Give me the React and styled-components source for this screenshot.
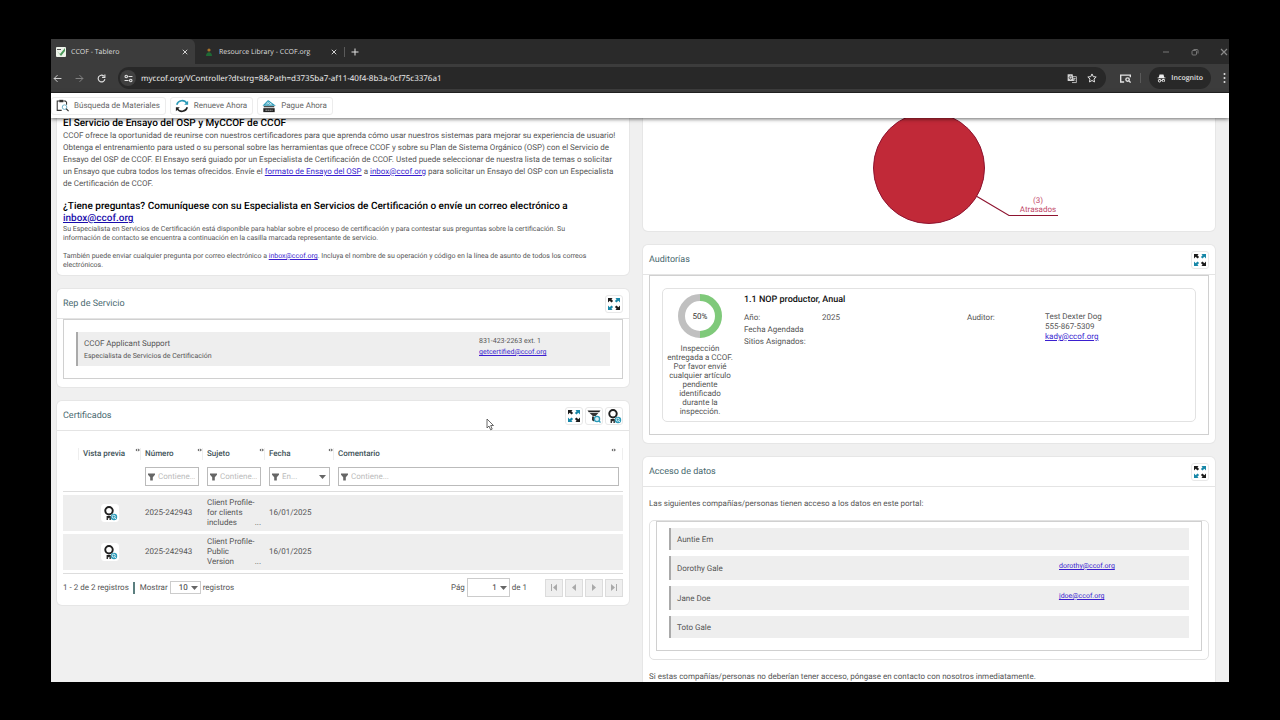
import React from 'react';
import styled, {createGlobalStyle, css} from 'styled-components'

const GlobalStyle = createGlobalStyle`
  * {
    box-sizing: border-box;
  }
  body {
    margin: 0;
    background: #000;
    font-family: Roboto, "Liberation Sans", sans-serif;
    font-size: 8px;
    color: #555;
    text-rendering: geometricPrecision;
  }
  button, input, select {
    font-family: inherit;
    font-size: inherit;
    color: inherit;
    text-rendering: inherit;
    margin: 0;
  }
  h1, h2, h3, p {
    margin: 0;
  }
  a {
    color: #3a1fd0;
  }
`

/* browser frame */
const Desktop = styled.div`
  display: flex;
  height: 100vh;
  padding: 39px 51px 38px;
  background: #000;
`
const Window = styled.div`
  flex: 1;
  min-width: 0;
  display: flex;
  flex-direction: column;
  overflow: hidden;
  background: #f0f0f0;
`
const TabStrip = styled.div`
  display: flex;
  align-items: center;
  height: 25px;
  flex: none;
  background: #2a2a2a;
  color: #dedede;
  font-family: "Open Sans", "Noto Sans", sans-serif;
`
const Tab = styled.div`
  display: flex;
  align-items: center;
  gap: 5px;
  width: ${({$active}) => $active ? 144 : 149}px;
  height: 25px;
  padding: 0 5px;
  padding-left: ${({$active}) => $active ? 5 : 9}px;
  border-radius: 0 6px 0 0;
  font-size: 7px;
  background: ${({$active}) => $active ? '#3c3c3c' : 'transparent'};
`
const TabTitle = styled.span`
  flex: 1;
  padding-top: 1px;
  white-space: nowrap;
`
const ChromeButton = styled.button`
  display: flex;
  align-items: center;
  justify-content: center;
  width: ${({$w}) => $w || 10}px;
  height: 16px;
  padding: 0;
  border: 0;
  background: none;
  color: ${({$dim}) => $dim ? '#8a8a8a' : '#e2e2e2'};
`
const WindowButtons = styled.div`
  display: flex;
  gap: 19px;
  margin-left: auto;
`
const Toolbar = styled.div`
  display: flex;
  align-items: center;
  height: 29px;
  flex: none;
  gap: 12px;
  padding: 0 0 0 1px;
  background: #3c3c3c;
  border-bottom: 1px solid #262626;
  color: #e2e2e2;
`
const ToolbarEnd = styled.div`
  display: flex;
  align-items: center;
  gap: 8px;
`
const AddressBar = styled.div`
  flex: 1;
  display: flex;
  align-items: center;
  gap: 10px;
  height: 22px;
  padding: 0 9px 0 2px;
  border-radius: 11px;
  background: #282828;
`
const SiteInfo = styled.button`
  display: flex;
  align-items: center;
  justify-content: center;
  width: 16px;
  height: 16px;
  padding: 0;
  border: 0;
  border-radius: 8px;
  background: #404040;
  color: #e2e2e2;
`
const AddressInput = styled.input`
  flex: 1;
  min-width: 0;
  margin-left: -5px;
  padding: 0;
  border: 0;
  outline: 0;
  background: none;
  color: #ececec;
  font-family: "Noto Sans", "Open Sans", sans-serif;
  font-size: 8px;
`
const Incognito = styled.div`
  display: flex;
  align-items: center;
  gap: 5px;
  height: 22px;
  padding: 0 8px;
  border-radius: 11px;
  background: #282828;
  font-family: "Open Sans", "Noto Sans", sans-serif;
  font-size: 7px;
  font-weight: 600;
`
const Divider = styled.span`
  width: 1px;
  height: 10px;
  background: #5a5a5a;
`

/* portal */
const ActionBar = styled.div`
  position: relative;
  z-index: 1;
  display: flex;
  align-items: center;
  gap: 4px;
  height: 25px;
  flex: none;
  background: #fff;
  box-shadow: 0 1px 4px rgba(0, 0, 0, 0.6);
`
const ActionButton = styled.button`
  display: flex;
  align-items: center;
  gap: 5px;
  height: 18px;
  padding: 0 5px 0 4px;
  border: 1px solid #ececec;
  border-radius: 3px;
  background: #fff;
  color: #666;
`
const Columns = styled.div`
  display: grid;
  grid-template-columns: 1fr 1fr;
  gap: 14px;
  align-items: start;
  padding: 0 14px 0 6px;
`
const Column = styled.div`
  display: flex;
  flex-direction: column;
  gap: 14px;
`
const Card = styled.section`
  border-radius: 5px;
  background: #fff;
  box-shadow: 0 0 0 1px #e6e6e6;
  ${({$scrolled}) => $scrolled && css`
    border-top-left-radius: 0;
    border-top-right-radius: 0;
  `}
`
const CardHeader = styled.header`
  display: flex;
  align-items: center;
  gap: 2px;
  height: 30px;
  padding: 0 6px;
  border-bottom: 1px solid #e4e4e4;
`
const CardTitle = styled.h2`
  flex: 1;
  font-size: 9px;
  font-weight: 400;
  color: #4a6a70;
`
const IconButton = styled.button`
  display: flex;
  align-items: center;
  justify-content: center;
  width: 18px;
  height: 18px;
  padding: 0;
  border: 1px solid #e8e8e8;
  border-radius: 3px;
  background: #fff;
`
const CardBody = styled.div`
  padding: ${({$pad}) => $pad || '0 6px 8px'};
`
const Frame = styled.div`
  border: 1px solid #d0d0d0;
  padding: ${({$pad}) => $pad || '12px'};
`
const IntroTitle = styled.h3`
  font-size: 10px;
  font-weight: 500;
  line-height: 12px;
  color: #000;
  a {
    color: #1a0dab;
  }
`
const IntroText = styled.p`
  font-size: ${({$small}) => $small ? 7 : 8}px;
  line-height: ${({$small}) => $small ? 9 : 12}px;
  margin-bottom: ${({$gap}) => $gap || 0}px;
`
const Person = styled.div`
  display: grid;
  grid-template-columns: 395px 1fr;
  min-height: 34px;
  padding: 4px 6px;
  border-left: 2px solid #aaa;
  background: #eee;
  > :first-child {
    align-self: end;
  }
`
const PersonList = styled.div`
  display: grid;
  gap: 6px;
`
const RoundBox = styled.div`
  border: 1px solid #e2e2e2;
  border-radius: 5px;
  padding: ${({$pad}) => $pad};
`
const AccessPerson = styled.div`
  display: grid;
  grid-template-columns: 382px 1fr;
  align-items: center;
  height: ${({$tall}) => $tall ? 24 : 22}px;
  padding: 0 6px;
  border-left: 2px solid #aaa;
  background: #eee;
  a {
    padding-bottom: 4px;
    font-size: 7px;
  }
`
const Line = styled.div`
  font-size: ${({$size}) => $size || 8}px;
  line-height: ${({$lh}) => $lh || 12}px;
`

/* audits */
const Audit = styled.div`
  display: grid;
  grid-template-columns: 66px 1fr;
  gap: 11px;
`
const Progress = styled.div`
  display: flex;
  flex-direction: column;
  align-items: center;
  gap: 6px;
  text-align: center;
  line-height: 9px;
`
const AuditTitle = styled.h3`
  padding-bottom: 6px;
  font-size: 9px;
  font-weight: 500;
  line-height: 12px;
  color: #111;
`
const AuditFields = styled.div`
  display: grid;
  grid-template-columns: 78px 145px 78px 1fr;
`

/* certificates */
const Table = styled.table`
  width: 100%;
  table-layout: fixed;
  border-collapse: separate;
  border-spacing: 0;
  th, td {
    padding: 0 4px;
    text-align: left;
  }
`
const HeadCell = styled.th`
  height: 36px;
  vertical-align: middle;
  font-weight: 500;
  color: #3d5258;
  div {
    display: flex;
    justify-content: space-between;
    height: 12px;
    line-height: 12px;
    margin: 10px -4px 0 0;
    border-right: 1px solid #eee;
  }
  &:last-child div {
    padding-right: 6px;
  }
`
const FilterCell = styled.td`
  height: 25px;
  vertical-align: top;
  border-bottom: 1px solid #ddd;
`
const FilterBox = styled.label`
  display: flex;
  align-items: center;
  gap: 3px;
  height: 19px;
  padding: 0 3px 0 2px;
  border: 1px solid #bbb;
  background: #fff;
  input, select {
    flex: 1;
    width: 0;
    padding: 0;
    border: 0;
    outline: 0;
    appearance: none;
    background: none;
    color: #bbb;
  }
  input::placeholder {
    color: #bbb;
  }
`
const BodyCell = styled.td`
  height: 39px;
  border-top: 3px solid #fff;
  background: #eee;
  line-height: 10px;
`
const Thumb = styled(IconButton)`
  margin: 0 auto;
  border-color: #fff;
`
const Clipped = styled.div`
  display: flex;
  align-items: flex-end;
  justify-content: space-between;
  span:first-child {
    width: 48px;
  }
`
const Pager = styled.div`
  display: flex;
  align-items: center;
  gap: 3px;
  margin-top: 3px;
  padding-top: 4px;
  border-top: 1px solid #ddd;
`
const PagerMark = styled.span`
  width: 2px;
  height: 12px;
  margin: 0 2px 0 1px;
  background: #5b7f7f;
`
const SelectBox = styled.span`
  display: flex;
  align-items: center;
  gap: 3px;
  width: ${({$w}) => $w}px;
  height: ${({$h}) => $h}px;
  padding-right: 2px;
  border: 1px solid #ccc;
  background: #fff;
  select {
    flex: 1;
    width: 0;
    padding: 0;
    border: 0;
    outline: 0;
    appearance: none;
    background: none;
    text-align: right;
    text-align-last: right;
    color: #333;
  }
`
const PagerLabel = styled.label`
  display: flex;
  align-items: center;
  gap: 2px;
`
const PagerRight = styled.div`
  display: flex;
  align-items: center;
  gap: 2px;
  margin-left: auto;
`
const PagerTotal = styled.span`
  margin-right: 16px;
`
const PageButton = styled.button`
  display: flex;
  align-items: center;
  justify-content: center;
  width: 18px;
  height: 18px;
  padding: 0;
  border: 1px solid #dcdcdc;
  background: #efefef;
  color: #aaa;
`
const AccessBox = styled(RoundBox)`
  margin: 10px 0 11px;
`
const Pointer = styled.svg`
  position: absolute;
  z-index: 2;
  left: 486px;
  top: 418px;
`

const Stroke = ({size = 8, children, box = 16, w = 1.6}) => (
    <svg width={size} height={size} viewBox={`0 0 ${box} ${box}`} fill="none" stroke="currentColor" strokeWidth={w}>
        {children}
    </svg>
)
const CloseIcon = ({size = 6}) => <Stroke size={size} w={2.4}><path d="M2 2l12 12M14 2L2 14"/></Stroke>

const ExpandIcon = () => (
    <svg width="14" height="14" viewBox="0 0 14 14">
        <g fill="#1c1c1c">
            <path d="M1 1h4.6L4.4 2.3l1.7 1.8-1.6 1.5-1.8-1.8L1 5.4z"/>
            <path d="M13 13H8.4l1.2-1.3-1.7-1.8 1.6-1.5 1.8 1.8L13 8.6z"/>
        </g>
        <g fill="#1787a8">
            <path d="M13 1v4.4l-1.7-1.6-1.8 1.8-1.6-1.5 1.7-1.8L8.4 1z"/>
            <path d="M1 13V8.6l1.7 1.6 1.8-1.8 1.6 1.5-1.7 1.8L5.6 13z"/>
        </g>
    </svg>
)
const BadgeIcon = () => (
    <svg width="16" height="16" viewBox="0 0 16 16">
        <circle cx="7" cy="5.8" r="3.7" fill="#fff" stroke="#1f1f1f" strokeWidth="2"/>
        <path d="M7 3l.9 1.800 1.900.2-1.400 1.300.4 1.900L7 7.300l-1.800.9.4-1.900L4.200 5l1.900-.2z" fill="#fff"/>
        <path d="M4.600 11h4.200v4H7.500V12.500L6.700 13.500 5.900 12.500V15H4.600z" fill="#1f1f1f"/>
        <circle cx="12" cy="12" r="3.200" fill="#2b9ab8"/>
        <circle cx="11.700" cy="11.700" r="1.500" fill="none" stroke="#fff" strokeWidth=".8"/>
        <path d="M12.800 12.800l1.300 1.300" stroke="#fff" strokeWidth=".8"/>
    </svg>
)
const FilterClearIcon = () => (
    <svg width="16" height="16" viewBox="0 0 16 16">
        <path d="M1.500 2.500h13l-1.300 1.800H2.800z" fill="#222"/>
        <path d="M3.600 5h8.800L9.600 8H6.800z" fill="#333"/>
        <path d="M6 8.600h2v5l-2-1.400z" fill="#333"/>
        <circle cx="11" cy="11" r="2.600" fill="#d8eef4" stroke="#2b9ab8" strokeWidth="1.300"/>
        <path d="M13 13l1.500 1.500" stroke="#2b9ab8" strokeWidth="1.300"/>
    </svg>
)
const FunnelIcon = () => (
    <svg width="7" height="8" viewBox="0 0 7 8">
        <path d="M0 0.5h7v1.3L4.800 4.300V7.500H2.200V4.300L0 1.800z" fill="#666"/>
    </svg>
)
const Caret = () => <svg width="7" height="4" viewBox="0 0 7 4"><path d="M0 0h7L3.500 4z" fill="#666"/></svg>
const ResizeMark = () => (
    <svg width="5" height="4" viewBox="1 0 5 4">
        <path d="M3.200 .5v3L1.500 2zM4.200 .5v3L5.900 2z" fill="#555"/>
    </svg>
)

const ExpandButton = () => <IconButton aria-label="Expandir"><ExpandIcon/></IconButton>

const Donut = () => (
    <svg width="44" height="44" viewBox="0 0 44 44">
        <path d="M22 3.5a18.5 18.5 0 0 0 0 37" fill="none" stroke="#c0c0c0" strokeWidth="7"/>
        <path d="M22 3.5a18.5 18.5 0 0 1 0 37" fill="none" stroke="#7fc97a" strokeWidth="7"/>
        <text x="22" y="25" textAnchor="middle" fontSize="8" fill="#333">50%</text>
    </svg>
)

const PieChart = styled.svg`
  display: block;
  width: 100%;
  height: 113px;
`
const PieCard = () => (
    <Card $scrolled>
        <PieChart viewBox="0 1 300 113">
            <circle cx="150" cy="51" r="55.5" fill="#c12938" stroke="#8e1430" strokeWidth="1"/>
            <path d="M198 79.500L230 98.500h49" fill="none" stroke="#8e1430" strokeWidth="1.200"/>
            <g fontSize="8" fill="#c2496a" textAnchor="middle">
                <text x="259" y="86">(3)</text>
                <text x="259" y="95">Atrasados</text>
            </g>
        </PieChart>
    </Card>
)

const certificates = [
    {number: '2025-242943', subject: 'Client Profile- for clients includes', date: '16/01/2025'},
    {number: '2025-242943', subject: 'Client Profile- Public Version', date: '16/01/2025'},
]
const people = [
    {name: 'Auntie Em'},
    {name: 'Dorothy Gale', email: 'dorothy@ccof.org'},
    {name: 'Jane Doe', email: 'jdoe@ccof.org'},
    {name: 'Toto Gale'},
]
const pageButtons = [
    {label: 'Primera', d: 'M1 0h1v7H1zM7 0v7L3 3.5z'},
    {label: 'Anterior', d: 'M6 0v7L2 3.5z'},
    {label: 'Siguiente', d: 'M2 0v7l4-3.500z'},
    {label: 'Última', d: 'M6 0h1v7H6zM1 0v7l4-3.500z'},
]

const TextFilter = ({label}) => (
    <FilterBox>
        <FunnelIcon/>
        <input type="text" placeholder="Contiene..." aria-label={label}/>
    </FilterBox>
)

const Certificates = () => (
    <Card>
        <CardHeader>
            <CardTitle>Certificados</CardTitle>
            <ExpandButton/>
            <IconButton aria-label="Quitar filtros"><FilterClearIcon/></IconButton>
            <IconButton aria-label="Ver certificados"><BadgeIcon/></IconButton>
        </CardHeader>
        <CardBody>
            <Table>
                <colgroup>
                    <col width="16"/>
                    <col width="62"/>
                    <col width="62"/>
                    <col width="62"/>
                    <col width="69"/>
                    <col/>
                </colgroup>
                <thead>
                <tr>
                    <HeadCell><div/></HeadCell>
                    {['Vista previa', 'Número', 'Sujeto', 'Fecha', 'Comentario'].map((title) => (
                        <HeadCell key={title}><div>{title}<ResizeMark/></div></HeadCell>
                    ))}
                </tr>
                <tr>
                    <FilterCell/>
                    <FilterCell/>
                    <FilterCell><TextFilter label="Número"/></FilterCell>
                    <FilterCell><TextFilter label="Sujeto"/></FilterCell>
                    <FilterCell>
                        <FilterBox>
                            <FunnelIcon/>
                            <select aria-label="Fecha"><option>En...</option></select>
                            <Caret/>
                        </FilterBox>
                    </FilterCell>
                    <FilterCell><TextFilter label="Comentario"/></FilterCell>
                </tr>
                </thead>
                <tbody>
                {certificates.map((row) => (
                    <tr key={row.subject}>
                        <BodyCell/>
                        <BodyCell><Thumb aria-label="Vista previa"><BadgeIcon/></Thumb></BodyCell>
                        <BodyCell>{row.number}</BodyCell>
                        <BodyCell><Clipped><span>{row.subject}</span><span>...</span></Clipped></BodyCell>
                        <BodyCell>{row.date}</BodyCell>
                        <BodyCell/>
                    </tr>
                ))}
                </tbody>
            </Table>
            <Pager>
                <span>1 - 2 de 2 registros</span>
                <PagerMark/>
                <PagerLabel>
                    Mostrar
                    <SelectBox $w={31} $h={13}>
                        <select defaultValue="10"><option>10</option></select>
                        <Caret/>
                    </SelectBox>
                    registros
                </PagerLabel>
                <PagerRight>
                    <PagerLabel>
                        Pág
                        <SelectBox $w={43} $h={19}>
                            <select defaultValue="1"><option>1</option></select>
                            <Caret/>
                        </SelectBox>
                    </PagerLabel>
                    <PagerTotal>de 1</PagerTotal>
                    {pageButtons.map(({label, d}) => (
                        <PageButton key={label} aria-label={label}>
                            <svg width="8" height="7" viewBox="0 0 8 7"><path d={d} fill="currentColor"/></svg>
                        </PageButton>
                    ))}
                </PagerRight>
            </Pager>
        </CardBody>
    </Card>
)

const Intro = () => (
    <Card $scrolled>
        <CardBody $pad="0 6px 5px">
            <IntroTitle>El Servicio de Ensayo del OSP y MyCCOF de CCOF</IntroTitle>
            <IntroText $gap={11}>
                CCOF ofrece la oportunidad de reunirse con nuestros certificadores para que aprenda cómo usar nuestros
                sistemas para mejorar su experiencia de usuario! Obtenga el entrenamiento para usted o su personal
                sobre las herramientas que ofrece CCOF y sobre su Plan de Sistema Orgánico (OSP) con el Servicio de
                Ensayo del OSP de CCOF. El Ensayo será guiado por un Especialista de Certificación de CCOF. Usted puede
                seleccionar de nuestra lista de temas o solicitar<br/>
                un Ensayo que cubra todos los temas ofrecidos. Envíe
                el <a href="#formato">formato de Ensayo del OSP</a> a <a href="mailto:inbox@ccof.org">inbox@ccof.org</a> para
                solicitar un Ensayo del OSP con un Especialista<br/>
                de Certificación de CCOF.
            </IntroText>
            <IntroTitle>
                ¿Tiene preguntas? Comuníquese con su Especialista en Servicios de Certificación o envíe un correo
                electrónico a <a href="mailto:inbox@ccof.org">inbox@ccof.org</a>
            </IntroTitle>
            <IntroText $small $gap={9}>
                Su Especialista en Servicios de Certificación está disponible para hablar sobre el proceso de
                certificación y para contestar sus preguntas sobre la certificación. Su<br/>
                información de contacto se encuentra a continuación en la casilla marcada representante de servicio.
            </IntroText>
            <IntroText $small>
                También puede enviar cualquier pregunta por correo electrónico
                a <a href="mailto:inbox@ccof.org">inbox@ccof.org</a>. Incluya el nombre de su operación y código en la
                línea de asunto de todos los correos<br/>
                electrónicos.
            </IntroText>
        </CardBody>
    </Card>
)

const ServiceRep = () => (
    <Card>
        <CardHeader><CardTitle>Rep de Servicio</CardTitle><ExpandButton/></CardHeader>
        <CardBody>
            <Frame>
                <Person>
                    <div>
                        <Line>CCOF Applicant Support</Line>
                        <Line $size={7}>Especialista de Servicios de Certificación</Line>
                    </div>
                    <div>
                        <Line $size={7} $lh={11}>831-423-2263 ext. 1</Line>
                        <Line $size={7} $lh={11}><a href="mailto:getcertified@ccof.org">getcertified@ccof.org</a></Line>
                    </div>
                </Person>
            </Frame>
        </CardBody>
    </Card>
)

const Audits = () => (
    <Card>
        <CardHeader><CardTitle>Auditorías</CardTitle><ExpandButton/></CardHeader>
        <CardBody>
            <Frame>
                <RoundBox $pad="5px 4px">
                    <Audit>
                        <Progress>
                            <Donut/>
                            <span>Inspección entregada a CCOF. Por favor envié cualquier artículo pendiente identificado durante la inspección.</span>
                        </Progress>
                        <div>
                            <AuditTitle>1.1 NOP productor, Anual</AuditTitle>
                            <AuditFields>
                                <div>
                                    <Line>Año:</Line>
                                    <Line>Fecha Agendada</Line>
                                    <Line>Sitios Asignados:</Line>
                                </div>
                                <Line>2025</Line>
                                <Line>Auditor:</Line>
                                <div>
                                    <Line $lh={10}>Test Dexter Dog</Line>
                                    <Line $lh={10}>555-867-5309</Line>
                                    <Line $lh={10}><a href="mailto:kady@ccof.org">kady@ccof.org</a></Line>
                                </div>
                            </AuditFields>
                        </div>
                    </Audit>
                </RoundBox>
            </Frame>
        </CardBody>
    </Card>
)

const DataAccess = () => (
    <Card>
        <CardHeader><CardTitle>Acceso de datos</CardTitle><ExpandButton/></CardHeader>
        <CardBody $pad="11px 6px 20px">
            <Line>Las siguientes compañías/personas tienen acceso a los datos en este portal:</Line>
            <AccessBox $pad="0 6px 8px">
                <Frame $pad="6px 12px 12px">
                    <PersonList>
                        {people.map(({name, email}) => (
                            <AccessPerson key={name} $tall={Boolean(email)}>
                                <span>{name}</span>
                                {email && <a href={`mailto:${email}`}>{email}</a>}
                            </AccessPerson>
                        ))}
                    </PersonList>
                </Frame>
            </AccessBox>
            <Line>Si estas compañías/personas no deberían tener acceso, póngase en contacto con nosotros inmediatamente.</Line>
        </CardBody>
    </Card>
)

const Browser = () => (
    <>
        <TabStrip>
            <Tab $active>
                <svg width="10" height="10" viewBox="0 0 10 10">
                    <rect width="10" height="10" rx="1" fill="#eef3ea"/>
                    <path d="M1 4l3 3 5-6v3L5 9z" fill="#4c9a5a"/>
                    <path d="M1 2h4v1H1z" fill="#555"/>
                </svg>
                <TabTitle>CCOF - Tablero</TabTitle>
                <ChromeButton aria-label="Cerrar"><CloseIcon/></ChromeButton>
            </Tab>
            <Tab>
                <svg width="10" height="10" viewBox="0 0 10 10">
                    <circle cx="5" cy="3" r="1.6" fill="#a8742c"/>
                    <path d="M2 9c0-5 6-5 6 0z" fill="#1e6a35"/>
                </svg>
                <TabTitle>Resource Library - CCOF.org</TabTitle>
                <ChromeButton aria-label="Cerrar"><CloseIcon/></ChromeButton>
            </Tab>
            <Divider/>
            <ChromeButton aria-label="Nueva pestaña" $w={20}><Stroke w={2}><path d="M8 1v14M1 8h14"/></Stroke></ChromeButton>
            <WindowButtons>
                <ChromeButton aria-label="Minimizar" $dim><Stroke><path d="M2 8h12"/></Stroke></ChromeButton>
                <ChromeButton aria-label="Restaurar" $dim>
                    <Stroke><rect x="2" y="5" width="9" height="9" rx="2"/><path d="M5 3h7q2 0 2 2v6"/></Stroke>
                </ChromeButton>
                <ChromeButton aria-label="Salir" $dim><CloseIcon size={8}/></ChromeButton>
            </WindowButtons>
        </TabStrip>
        <Toolbar>
            <ChromeButton aria-label="Atrás"><Stroke size={9}><path d="M15 8H2M8 2L2 8l6 6"/></Stroke></ChromeButton>
            <ChromeButton aria-label="Adelante" $dim><Stroke size={9}><path d="M1 8h13M8 2l6 6-6 6"/></Stroke></ChromeButton>
            <ChromeButton aria-label="Recargar">
                <Stroke size={9} w={2}><path d="M14 9a6 6 0 1 1-2-5.500M14 1v5H9"/></Stroke>
            </ChromeButton>
            <AddressBar>
                <SiteInfo aria-label="Información del sitio">
                    <Stroke size={9} w={2}>
                        <circle cx="4" cy="4.500" r="2.200"/><path d="M8 4.500h7M1 11.500h7"/><circle cx="12" cy="11.500" r="2.200"/>
                    </Stroke>
                </SiteInfo>
                <AddressInput
                    aria-label="Dirección"
                    defaultValue="myccof.org/VController?dtstrg=8&Path=d3735ba7-af11-40f4-8b3a-0cf75c3376a1"
                />
                <ChromeButton aria-label="Traducir">
                    <svg width="11" height="11" viewBox="0 0 16 16">
                        <path d="M1 1h8l2 11H2q-1 0-1-1z" fill="#d4d4d4"/>
                        <path d="M8 5h7v9.500H8" fill="none" stroke="#d4d4d4" strokeWidth="1.300"/>
                        <path d="M7.500 5.500a2.300 2.300 0 1 0 .3 2H6" fill="none" stroke="#333" strokeWidth="1.200"/>
                        <path d="M10 8h4M12 7v1q0 2-2 4M11 9.500l2.500 2.500" fill="none" stroke="#d4d4d4"/>
                    </svg>
                </ChromeButton>
                <ChromeButton aria-label="Favorito">
                    <Stroke size={10}><path d="M8 1.500l2 4.300 4.700.6-3.500 3.200.9 4.700L8 12l-4.100 2.300.9-4.700L1.300 6.400 6 5.800z"/></Stroke>
                </ChromeButton>
            </AddressBar>
            <ToolbarEnd>
                <ChromeButton aria-label="Buscar en la página" $w={14}>
                    <Stroke size={11} w={2}>
                        <path d="M6 13H1V3h14v3M1 3h7"/><circle cx="11" cy="9.500" r="2.500"/><path d="M13 11.500l2.500 2.500"/>
                    </Stroke>
                </ChromeButton>
                <Divider/>
                <Incognito>
                    <svg width="9" height="9" viewBox="0 0 16 16" fill="#ececec">
                        <path d="M4.500 1h7L13 6h2v1.500H1V6h2z"/>
                        <path d="M4.500 9a3 3 0 1 0 2.900 3.500h1.200A3 3 0 1 0 8.400 11h-.8A3 3 0 0 0 4.500 9zm0 1.500a1.500 1.500 0 1 1 0 3 1.500 1.500 0 0 1 0-3zm7 0a1.500 1.500 0 1 1 0 3 1.500 1.500 0 0 1 0-3z"/>
                    </svg>
                    Incognito
                </Incognito>
                <ChromeButton aria-label="Menú">
                    <svg width="3" height="10" viewBox="0 0 3 10" fill="currentColor">
                        <circle cx="1.500" cy="1" r="1"/><circle cx="1.500" cy="5" r="1"/><circle cx="1.500" cy="9" r="1"/>
                    </svg>
                </ChromeButton>
            </ToolbarEnd>
        </Toolbar>
    </>
)

const Actions = () => (
    <ActionBar>
        <ActionButton>
            <svg width="13" height="13" viewBox="0 0 16 16">
                <path d="M7 14H1.500V2.500H4M9 2.500h2.500L13 4v3" fill="none" stroke="#333" strokeWidth="1.300"/>
                <path d="M4 1h5v3H4z" fill="#333"/>
                <circle cx="10.500" cy="10" r="2.800" fill="#fff" stroke="#6aaec4" strokeWidth="1.200"/>
                <path d="M12.500 12l3 3" stroke="#333" strokeWidth="1.500"/>
            </svg>
            Búsqueda de Materiales
        </ActionButton>
        <ActionButton>
            <svg width="14" height="14" viewBox="0 0 16 16" fill="none" strokeWidth="1.800">
                <path d="M2 6.500A6.300 6.300 0 0 1 13.500 5" stroke="#2b9ab8"/>
                <path d="M14 9.500A6.300 6.300 0 0 1 2.500 11" stroke="#222"/>
                <path d="M15 2v4.500h-4.500z" fill="#2b9ab8"/>
                <path d="M1 14V9.500h4.500z" fill="#222"/>
            </svg>
            Renueve Ahora
        </ActionButton>
        <ActionButton>
            <svg width="14" height="14" viewBox="0 0 16 16">
                <path d="M2 7l5-5 7 5z" fill="#fff" stroke="#2b9ab8" strokeWidth="1.200"/>
                <path d="M4 6.500l5-4M6 7l4-3" stroke="#2b9ab8"/>
                <path d="M2 8.800h12" stroke="#333" strokeWidth="1.300"/>
                <rect x="1.500" y="10.500" width="13" height="4.500" fill="#222"/>
                <path d="M4 12.800h8" stroke="#ddd" strokeDasharray="1.500 .8"/>
            </svg>
            Pague Ahora
        </ActionButton>
    </ActionBar>
)

const App = () => (
    <Desktop>
        <GlobalStyle/>
        <Window>
            <Browser/>
            <Actions/>
            <Columns>
                <Column>
                    <Intro/>
                    <ServiceRep/>
                    <Certificates/>
                </Column>
                <Column>
                    <PieCard/>
                    <Audits/>
                    <DataAccess/>
                </Column>
            </Columns>
        </Window>
        <Pointer width="8" height="13" viewBox="0 0 8 13">
            <path d="M1 1v9l2-2 1.600 3.800 1.600-.7L4.700 7.500h2.800z" fill="#fff" stroke="#444" strokeWidth=".8"/>
        </Pointer>
    </Desktop>
)
export default App
